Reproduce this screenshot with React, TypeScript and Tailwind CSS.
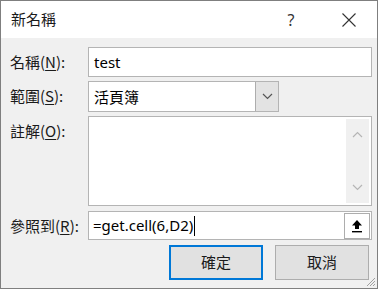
import React from "react";

const cjk = { fontFamily: '"Noto Sans CJK TC", "Noto Sans", sans-serif' };
const latin = { fontFamily: '"Noto Sans", "Noto Sans CJK TC", sans-serif' };

function Chevron({ dir, color }: { dir: "up" | "down"; color: string }) {
  return (
    <svg width="11" height="7" viewBox="0 0 11 7">
      {dir === "down" ? (
        <path d="M1 1 L5.5 5.5 L10 1" fill="none" stroke={color} strokeWidth="1.2" />
      ) : (
        <path d="M1 6 L5.5 1.5 L10 6" fill="none" stroke={color} strokeWidth="1.2" />
      )}
    </svg>
  );
}

function Label({ main, key1 }: { main: string; key1: string }) {
  return (
    <div className="w-[78px] text-[15px] text-[#1a1a1a] leading-none pt-[7px]" style={cjk}>
      {main}(<span className="underline underline-offset-2">{key1}</span>):
    </div>
  );
}

export default function App() {
  return (
    <div className="w-[378px] h-[289px] bg-[#f0f0f0] border border-[#7f7f7f] flex flex-col relative overflow-hidden">
      {/* Title bar */}
      <div className="h-[37px] bg-white flex items-center shrink-0">
        <div className="pl-[10px] text-[15px] text-[#1a1a1a] flex-1" style={cjk}>
          新名稱
        </div>
        <div className="w-[40px] text-center text-[16px] text-[#333] mr-[18px]" style={latin}>
          ?
        </div>
        <div className="w-[40px] flex justify-center mr-[8px]">
          <svg width="14" height="14" viewBox="0 0 14 14">
            <path d="M0.5 0.5 L13.5 13.5 M13.5 0.5 L0.5 13.5" stroke="#333" strokeWidth="1.1" />
          </svg>
        </div>
      </div>

      <div className="flex flex-col pl-[9px] pr-[5px] pt-[9px]">
        {/* Name */}
        <div className="flex h-[30px]">
          <Label main="名稱" key1="N" />
          <div className="flex-1 bg-white border border-[#b4b4b4] flex items-center pl-[5px] text-[15px] text-black" style={latin}>
            test
          </div>
        </div>

        {/* Scope */}
        <div className="flex h-[31px] mt-[4px]">
          <Label main="範圍" key1="S" />
          <div className="w-[191px] bg-white border border-[#b4b4b4] flex items-center">
            <div className="flex-1 pl-[5px] text-[15px] text-black pt-[2px]" style={cjk}>
              活頁簿
            </div>
            <div className="w-[23px] h-full bg-[#e3e3e3] border-l border-[#adadad] flex items-center justify-center">
              <Chevron dir="down" color="#555" />
            </div>
          </div>
        </div>

        {/* Comment */}
        <div className="flex h-[90px] mt-[4px]">
          <Label main="註解" key1="O" />
          <div className="flex-1 bg-white border border-[#b4b4b4] flex justify-end p-[2px]">
            <div className="w-[23px] bg-[#f0f0f0] flex flex-col items-center justify-between py-[12px]">
              <Chevron dir="up" color="#b5b5b5" />
              <Chevron dir="down" color="#b5b5b5" />
            </div>
          </div>
        </div>

        {/* Refers to */}
        <div className="flex h-[29px] mt-[5px]">
          <Label main="參照到" key1="R" />
          <div className="flex-1 bg-white border border-[#b4b4b4] flex items-center">
            <div className="flex-1 pl-[4px] text-[15px] text-black flex items-center" style={latin}>
              =get.cell(6,D2)<span className="inline-block w-[1px] h-[20px] bg-black ml-[1px]" />
            </div>
            <div className="w-[26px] h-[26px] mr-[1px] bg-white border border-[#adadad] flex items-center justify-center">
              <svg width="12" height="14" viewBox="0 0 12 14">
                <path d="M6 1 L11 6.5 L8 6.5 L8 10 L4 10 L4 6.5 L1 6.5 Z" fill="#000" />
                <rect x="1" y="12" width="10" height="1.4" fill="#000" />
              </svg>
            </div>
          </div>
        </div>

        {/* Buttons */}
        <div className="flex justify-end gap-[12px] mt-[5px] pr-[3px]">
          <div className="w-[94px] h-[35px] bg-[#e1e1e1] border-[2px] border-[#0078d7] flex items-center justify-center text-[15px] text-[#1a1a1a]" style={cjk}>
            確定
          </div>
          <div className="w-[94px] h-[35px] bg-[#e1e1e1] border border-[#adadad] flex items-center justify-center text-[15px] text-[#1a1a1a]" style={cjk}>
            取消
          </div>
        </div>
      </div>

      {/* Resize grip */}
      <svg className="absolute right-[1px] bottom-[1px]" width="12" height="12" viewBox="0 0 12 12">
        <path d="M11 3 L3 11 M11 6 L6 11 M11 9 L9 11" stroke="#a0a0a0" strokeWidth="1" />
      </svg>
    </div>
  );
}
